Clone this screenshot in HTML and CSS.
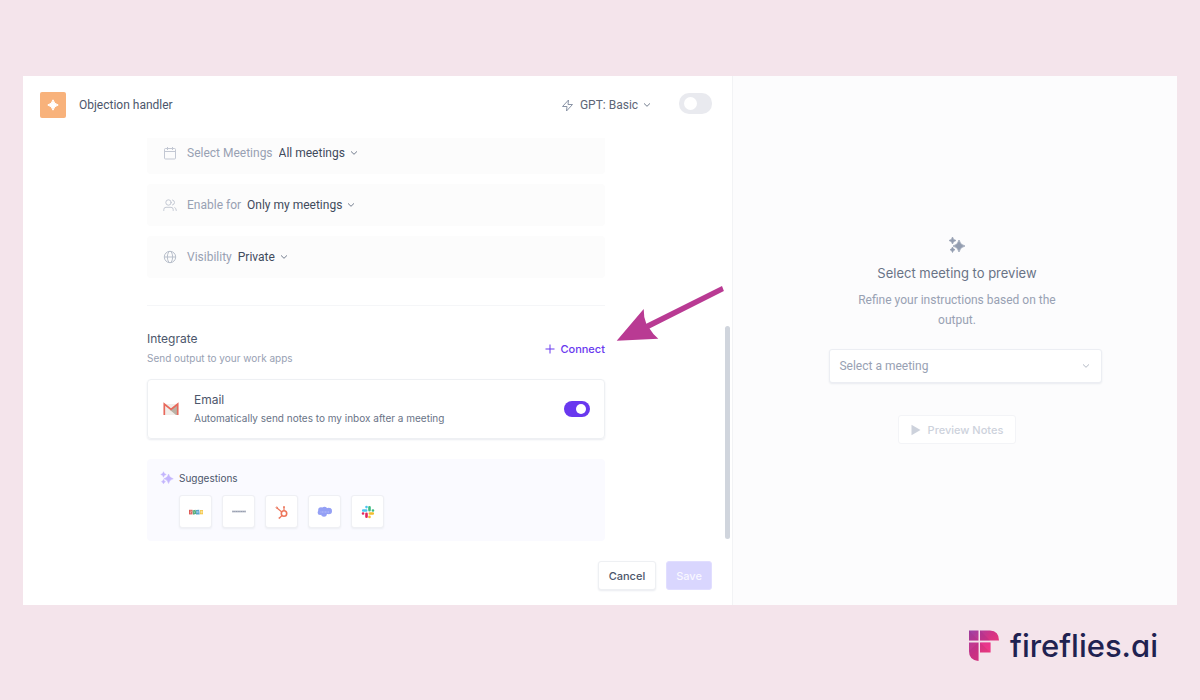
FILE: index.html
```html
<!DOCTYPE html>
<html lang="en">
<head>
<meta charset="utf-8">
<title>Objection handler</title>
<link rel="stylesheet" href="styles.css">
</head>
<body>
<svg width="0" height="0" class="defs" aria-hidden="true">
  <symbol id="chevron" viewBox="0 0 10 10"><path d="M2.300 3.700 5 6.300 7.700 3.700" fill="none" stroke="currentColor" stroke-linecap="round" stroke-linejoin="round"/></symbol>
  <symbol id="sparkles" viewBox="0 0 18 18"><path d="M11 4 Q12 9 17 10 Q12 11 11 16 Q10 11 5 10 Q10 9 11 4ZM4.500 1 Q5 4 8 4.500 Q5 5 4.500 8 Q4 5 1 4.500 Q4 4 4.500 1ZM4.500 11 Q5 13.200 7 13.700 Q5 14.200 4.500 16.500 Q4 14.200 2 13.700 Q4 13.200 4.500 11Z" fill="currentColor" stroke="currentColor" stroke-width=".7" stroke-linejoin="round"/></symbol>
</svg>
<main class="window">
  <section class="editor">
    <header class="topbar">
      <span class="app-icon"><svg width="12" height="12" viewBox="0 0 12 12"><path d="M6 .8 Q7 5 11.200 6 Q7 7 6 11.200 Q5 7 .8 6 Q5 5 6 .8Z" fill="#fff" stroke="#fff" stroke-linejoin="round"/></svg></span>
      <h1 class="title">Objection handler</h1>
      <label class="picker model">
        <svg width="13" height="13" viewBox="0 0 13 13" fill="none" stroke="#8a94a6" stroke-linejoin="round"><path d="M7.500 1 1.500 7.500H6L5.500 12 11.500 5.500H7Z"/></svg>
        <select aria-label="Model"><option>GPT: Basic</option></select>
        <svg class="chev" width="10" height="10"><use href="#chevron"/></svg>
      </label>
      <input type="checkbox" class="switch switch-lg" aria-label="Enable app">
    </header>
    <div class="scroll">
      <div class="settings">
        <label class="row">
          <svg width="14" height="14" viewBox="0 0 14 14" fill="none" stroke="#c3c8d3"><rect x="1.500" y="2.500" width="11" height="10.500" rx="1"/><path d="M1.500 5.500h11M4.500 1v3M9.500 1v3"/></svg>
          <span>Select Meetings</span>
          <select><option>All meetings</option></select>
          <svg class="chev" width="10" height="10"><use href="#chevron"/></svg>
        </label>
        <label class="row">
          <svg width="14" height="14" viewBox="0 0 14 14" fill="none" stroke="#c3c8d3" stroke-linecap="round"><circle cx="5.500" cy="4.500" r="2.700"/><path d="M.8 12.500V11.500Q.8 9.300 3 9.300H8Q10.200 9.300 10.200 11.500V12.500M9.500 2Q11.500 2.500 11.500 4.500T9.500 7M11.800 9.500Q13.300 10 13.300 12.500"/></svg>
          <span>Enable for</span>
          <select><option>Only my meetings</option></select>
          <svg class="chev" width="10" height="10"><use href="#chevron"/></svg>
        </label>
        <label class="row">
          <svg width="14" height="14" viewBox="0 0 14 14" fill="none" stroke="#b8bfcb"><circle cx="7" cy="7" r="5.700"/><ellipse cx="7" cy="7" rx="2.600" ry="5.700"/><path d="M1.300 7h11.400"/></svg>
          <span>Visibility</span>
          <select><option>Private</option></select>
          <svg class="chev" width="10" height="10"><use href="#chevron"/></svg>
        </label>
      </div>
      <section class="integrate">
        <div>
          <h2>Integrate</h2>
          <p>Send output to your work apps</p>
        </div>
        <button type="button" class="connect"><svg width="10" height="10" viewBox="0 0 10 10"><path d="M5 .5v9M.5 5h9" stroke="currentColor"/></svg>Connect</button>
      </section>
      <div class="card">
        <svg width="16" height="14" viewBox="0 0 16 14"><path d="M1 2h14v11H1Z" fill="#f1eeea"/><path d="M8 8 14 2.500V13H13L7 8Z" fill="#b9b1a5"/><path d="M1.300 13V2L8 7.500 14.700 2V13" fill="none" stroke="#e8695c" stroke-width="1.700"/></svg>
        <label class="card-text" for="email"><strong>Email</strong><span>Automatically send notes to my inbox after a meeting</span></label>
        <input type="checkbox" class="switch" id="email" checked>
      </div>
      <section class="suggestions">
        <svg class="spark" width="14" height="14"><use href="#sparkles"/></svg>
        <h3>Suggestions</h3>
        <div class="apps">
          <button type="button" aria-label="Zoho"><svg width="16" height="16" viewBox="0 0 16 16"><path d="M1 5.800h3.500v4.600H1Z" fill="#dc5a55"/><path d="m4.500 6.500 3-.8 1 4-3.300 1Z" fill="#55ad7c"/><path d="m8 6 3.200-.3.500 4.700H8Z" fill="#58a5cc"/><path d="M12 6h3v4.300h-3Z" fill="#f4c84c"/><path d="M2 7h1.500L2 9h1.500M6 7.300l.5 1.800M9 7v2m1-2v2M13 7.300h1.200v1.500H13Z" fill="none" stroke="#fff" stroke-width=".4"/></svg></button>
          <button type="button" aria-label="Pipedrive"><svg width="16" height="16" viewBox="0 0 16 16"><path d="M1 7.500h14" stroke="#c3c7d1" stroke-width="2"/><path d="M1.500 7.500h13" stroke="#959cae" stroke-dasharray="1.200 .5"/></svg></button>
          <button type="button" aria-label="HubSpot"><svg width="16" height="16" viewBox="0 0 16 16" fill="none" stroke="#ed765b"><circle cx="10" cy="9.500" r="2.700" stroke-width="1.600"/><path d="M10 6.500V3M7.800 8 3 4M8 11.500 5.500 14" stroke-width="1.200"/><circle cx="10" cy="3" r=".6"/><circle cx="2.800" cy="3.600" r=".7"/><circle cx="5.300" cy="14" r=".5"/></svg></button>
          <button type="button" aria-label="Salesforce"><svg width="16" height="16" viewBox="0 0 16 16"><g fill="#94a0f5"><circle cx="4" cy="6" r="2.800"/><circle cx="7.500" cy="5.500" r="2.700"/><circle cx="11.700" cy="7" r="3.300"/><circle cx="3.200" cy="8.500" r="2.500"/><circle cx="7" cy="9.800" r="2.900"/><path d="M3 6h9v4H3Z"/></g><path d="M3.500 8h8.500" stroke="#b5bdfb" stroke-dasharray="1 .5"/></svg></button>
          <button type="button" aria-label="Slack"><svg width="16" height="16" viewBox="0 0 16 16" fill="none" stroke-width="2.600" stroke-linecap="round"><path d="M3.200 6.500h3M6.500 3v.1" stroke="#4ac6ef"/><path d="M9.500 3.200v3M13 6.500h-.1" stroke="#3dbb82"/><path d="M9.800 9.500h3M9.500 13v-.1" stroke="#f3bd2d"/><path d="M6.500 9.800v3M3 9.500h.1" stroke="#e0265f"/></svg></button>
        </div>
      </section>
    </div>
    <footer class="actions">
      <button type="button" class="cancel">Cancel</button>
      <button type="button" class="save">Save</button>
    </footer>
    <div class="scrollbar"></div>
  </section>
  <aside class="preview">
    <svg class="preview-icon" width="18" height="18"><use href="#sparkles"/></svg>
    <h2>Select meeting to preview</h2>
    <p>Refine your instructions based on the output.</p>
    <div class="meeting">
      <select aria-label="Meeting"><option>Select a meeting</option></select>
      <svg class="chev" width="10" height="10"><use href="#chevron"/></svg>
    </div>
    <button type="button" class="preview-button"><svg width="10" height="12" viewBox="0 0 10 12"><path d="M.5.8 9.500 6 .5 11.200Z" fill="currentColor"/></svg>Preview Notes</button>
  </aside>
  <svg class="arrow" width="108" height="56" viewBox="0 0 108 56" aria-hidden="true"><path d="M.7 54.700 27.700 23 Q27.500 31 30.300 37.700L106 0l1.900 5L33.500 42.500Q37 48.500 42.300 52.700Z" fill="#b93a93"/></svg>
</main>
<footer class="brand">
  <svg width="32" height="32" viewBox="0 0 32 32" aria-hidden="true">
    <defs><linearGradient id="pink" gradientUnits="userSpaceOnUse" x1="0" y1="0" x2="26" y2="26"><stop stop-color="#9644a9"/><stop offset=".55" stop-color="#d63384"/><stop offset="1" stop-color="#ef3b78"/></linearGradient></defs>
    <path d="M1 .5h9.500v10H1ZM12 .5H22Q31 1 31 10.500H12ZM1 12.500h9.500V31Q1 30 1 21ZM12 12.500h10.500v10H12Z" fill="url(#pink)"/>
    <path d="M1 .5 10.500 10.500H1ZM12 .5l10 10H12ZM1 21l9.500-8.500V31Q1 30 1 21Z" fill="#a52c83" opacity=".3"/>
    <path d="m12 12.500 10.500 10v-10Z" fill="#ff3d9b" opacity=".4"/>
  </svg>
  <span>fireflies.ai</span>
</footer>
</body>
</html>
```
FILE: styles.css
```css
* { box-sizing: border-box; }
body {
  margin: 0;
  min-height: 100vh;
  padding: 76px 23px 0;
  display: flex;
  flex-direction: column;
  background: #f4e4eb;
  font: 12px/16px Inter, "Liberation Sans", sans-serif;
  color: #4c566b;
}
h1, h2, h3, p { margin: 0; font-size: 12px; font-weight: 400; }
button, select { font: inherit; color: inherit; }
button { cursor: pointer; }
svg { flex: none; }
.defs { position: absolute; }
select { appearance: none; border: 0; padding: 0; background: none; outline-offset: 2px; }
.chev { color: #737d8e; pointer-events: none; }

.window { position: relative; flex: 1; display: flex; background: #fff; }
.editor { position: relative; flex: 712; min-width: 0; display: flex; flex-direction: column; }

.topbar, .settings, .preview p, .meeting { font-family: Roboto, "Liberation Sans", sans-serif; }
.topbar { display: flex; align-items: center; padding: 15px 20px 19px 17px; }
.app-icon {
  display: grid;
  place-items: center;
  width: 26px;
  height: 26px;
  margin: 1px 0;
  border-radius: 2px;
  background: #f8b27b;
}
.title { margin-left: 13px; }
.picker { display: flex; align-items: center; gap: 6px; margin: 0 27px 0 auto; }
.model { color: #5d6677; }

.switch {
  appearance: none;
  display: flex;
  align-items: center;
  width: 26px;
  height: 16px;
  margin: 0;
  padding: 0 4px;
  border-radius: 10px;
  background: #e9eaef;
}
.switch::before { content: ""; width: 10px; height: 10px; border-radius: 50%; background: #fff; }
.switch:checked { justify-content: flex-end; background: #6938ef; }
.switch-lg { width: 33px; height: 21px; margin-bottom: 3px; padding: 0 5px; }
.switch-lg::before { width: 13px; height: 13px; }

.scroll { flex: 1; overflow: hidden; padding: 0 127px 0 124px; }
.settings {
  display: grid;
  gap: 10px;
  margin-top: -6px;
  padding-bottom: 27px;
  border-bottom: 1px solid #f5f6f8;
}
.row {
  display: flex;
  align-items: center;
  gap: 6px;
  height: 42px;
  padding: 0 16px;
  border-radius: 4px;
  background: #fcfcfc;
  color: #98a1b3;
}
.row span { margin-left: 4px; }
.row select { color: #414b5c; }
.row .chev, .picker .chev { margin-left: -3px; }
.integrate { display: flex; align-items: center; justify-content: space-between; padding: 25px 0 13px; }
.integrate p { margin-top: 3px; font-size: 10px; color: #98a1b3; }
.connect {
  display: flex;
  align-items: center;
  gap: 5px;
  padding: 0;
  border: 0;
  background: none;
  color: #6938ef;
  font-size: 11px;
  font-weight: 500;
}
.card {
  display: flex;
  align-items: center;
  height: 60px;
  padding: 0 14px 0 15px;
  border: 1px solid #eef0f3;
  border-radius: 4px;
  box-shadow: 0 1px 2px #e9ebf0;
}
.card-text { display: grid; gap: 2px; margin: 0 auto 0 15px; }
.card-text strong { font-weight: 400; }
.card-text span { font-size: 10px; color: #697386; }
.suggestions {
  display: grid;
  grid-template-columns: 14px 1fr;
  align-items: center;
  gap: 9px 5px;
  margin-top: 20px;
  padding: 11px 13px 13px 13px;
  border-radius: 4px;
  background: #fafaff;
}
.spark { color: #c3b5fd; }
.suggestions h3 { font-size: 10px; }
.apps { grid-column: 2; display: flex; gap: 10px; }
.apps button {
  display: grid;
  place-items: center;
  width: 33px;
  height: 33px;
  padding: 0;
  border: 1px solid #eff0f4;
  border-radius: 3px;
  background: #fff;
  box-shadow: 0 1px 2px #eceef3;
}

.actions { display: flex; justify-content: flex-end; gap: 10px; padding: 20px 20px 15px; font-size: 11px; font-weight: 500; }
.actions button { height: 29px; padding: 0 10px; border: 1px solid #eef0f3; border-radius: 3px; }
.cancel { background: #fff; box-shadow: 0 1px 2px #e9ebf0; }
.actions .save { padding: 0 9px; background: #d9d6fe; border-color: #e1deff; color: #f8f7ff; }
.scrollbar {
  position: absolute;
  right: 2px;
  top: 250px;
  bottom: 66px;
  width: 5px;
  border-radius: 3px;
  background: #d0d5dd;
}

.preview {
  flex: 442;
  min-width: 0;
  display: flex;
  flex-direction: column;
  align-items: center;
  justify-content: center;
  padding: 0 0 1px 4px;
  border-left: 1px solid #f2f3f5;
  background: #fcfcfd;
  color: #98a1b3;
  text-align: center;
}
.preview-icon { color: #939db0; }
.preview h2 { margin-top: 11px; font-size: 13px; color: #697386; }
.preview p { max-width: 214px; margin-top: 9px; line-height: 20px; }
.meeting {
  display: flex;
  align-items: center;
  width: 273px;
  height: 34px;
  margin: 19px 0 32px 18px;
  padding: 0 10px 0 9px;
  border: 1px solid #eceef3;
  border-radius: 3px;
  background: #fff;
  box-shadow: 0 1px 2px #e9ebf0;
}
.meeting select { flex: 1; }
.meeting .chev { color: #b4bac5; }
.preview-button {
  display: flex;
  align-items: center;
  gap: 7px;
  height: 29px;
  padding: 0 12px;
  border: 1px solid #f3f4f7;
  border-radius: 3px;
  background: #fff;
  color: #cdd2dc;
  font-size: 11px;
  font-weight: 500;
}
.arrow { position: absolute; left: 593px; top: 210px; pointer-events: none; }

.brand {
  display: flex;
  align-items: center;
  justify-content: flex-end;
  gap: 10px;
  height: 95px;
  padding: 0 19px 14px;
  color: #1f2251;
  font-size: 31px;
  line-height: 40px;
  font-weight: 500;
  font-feature-settings: "cv11";
}
```
